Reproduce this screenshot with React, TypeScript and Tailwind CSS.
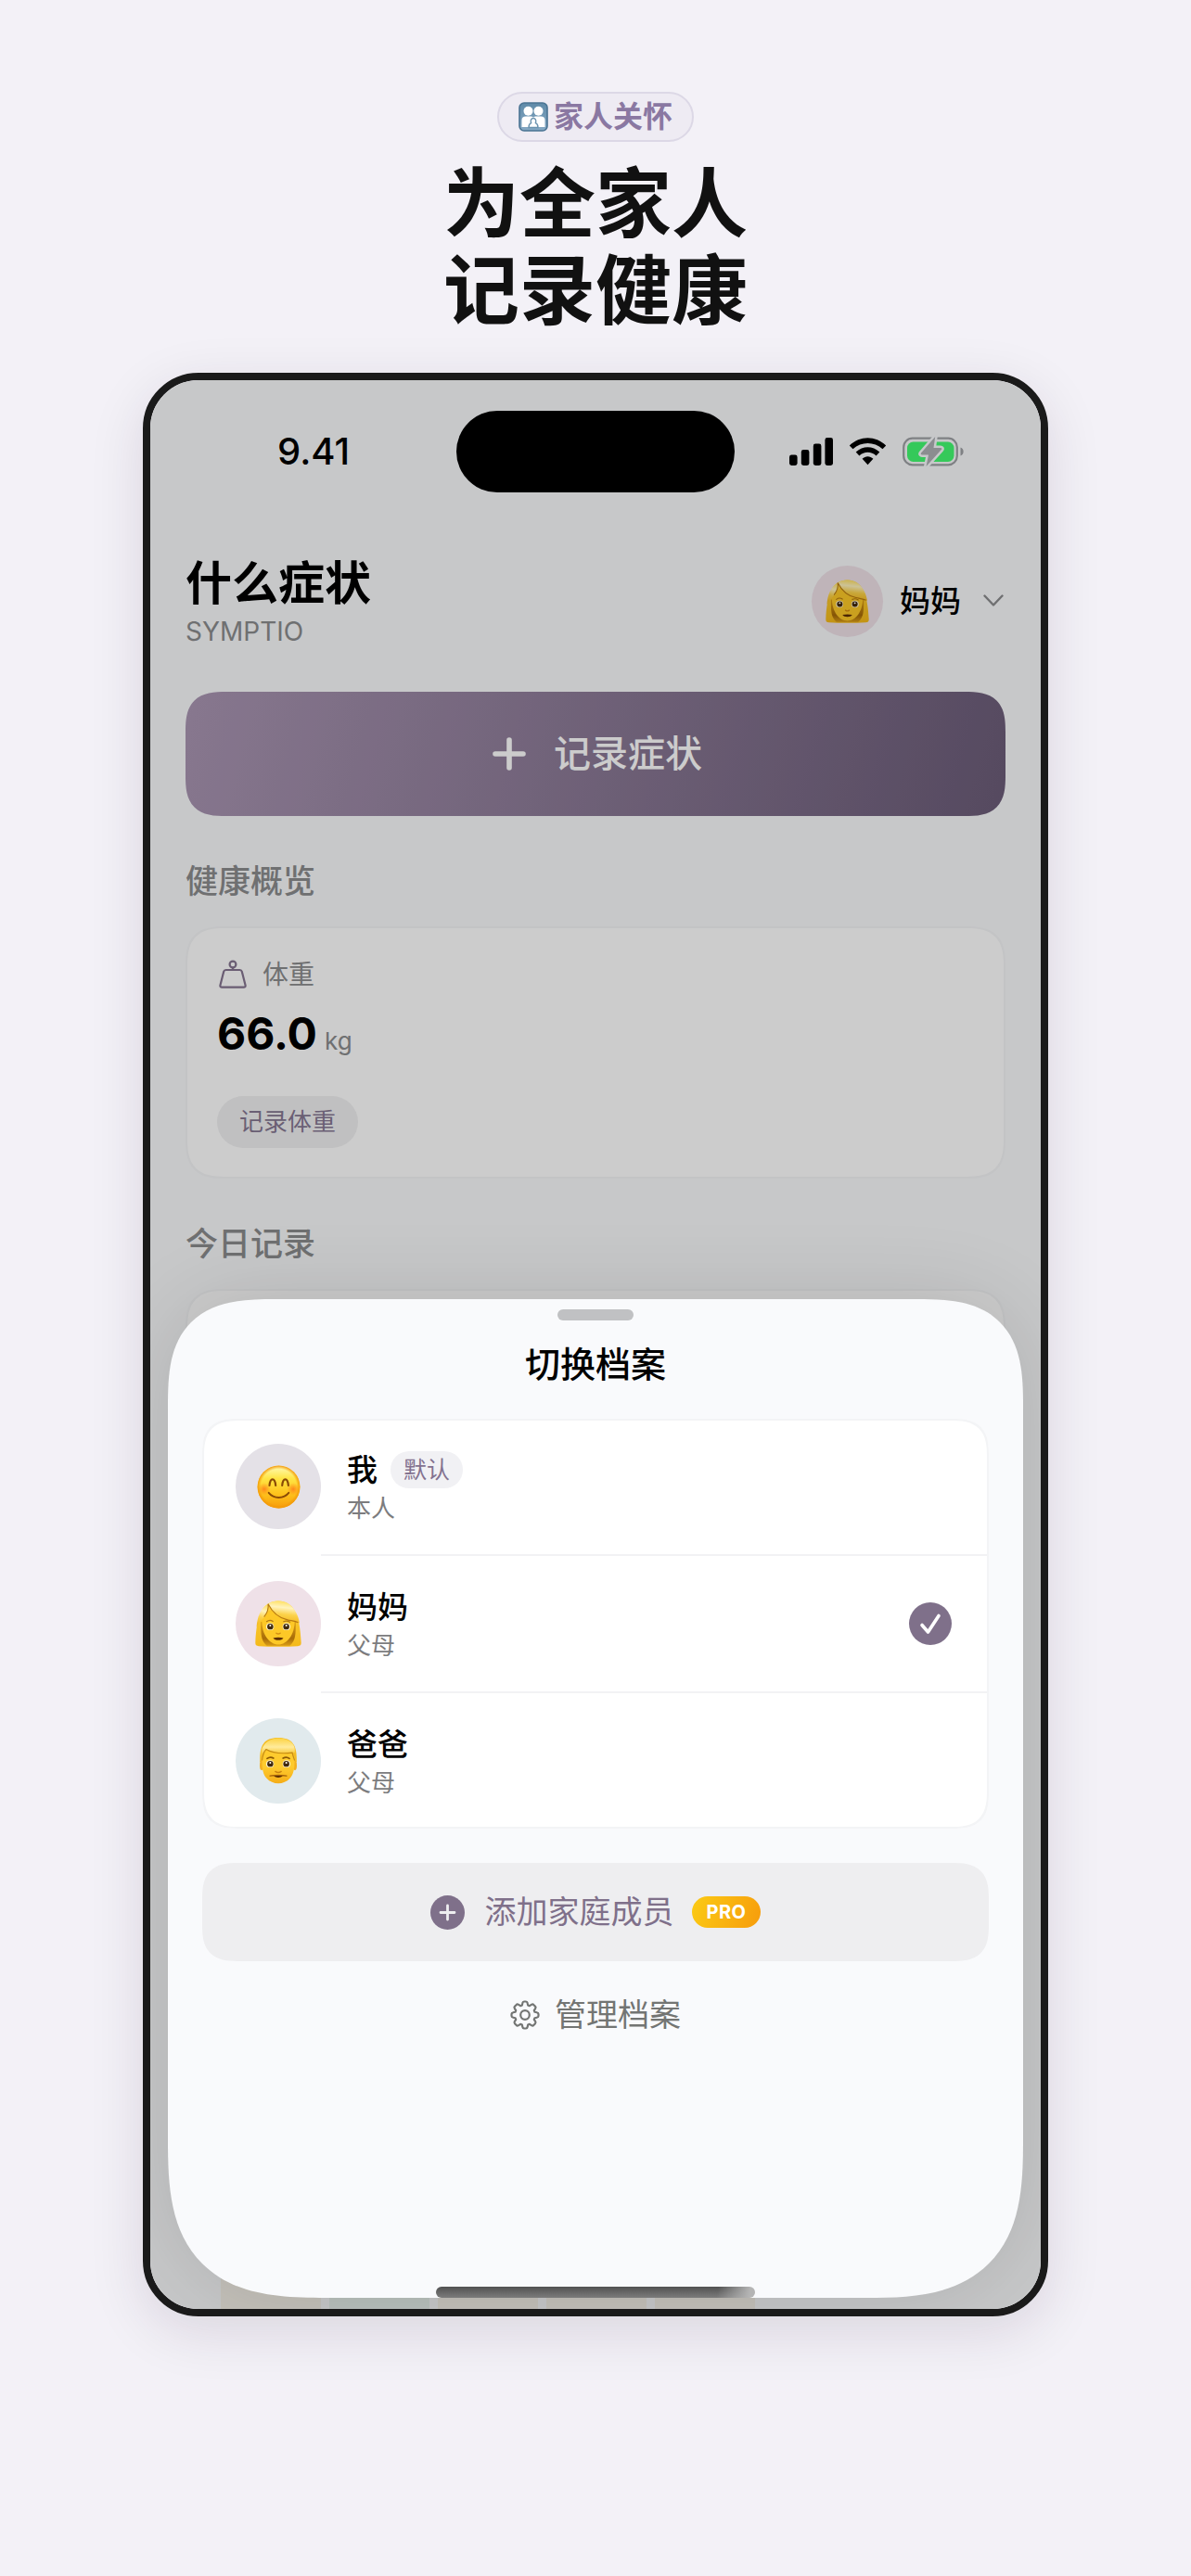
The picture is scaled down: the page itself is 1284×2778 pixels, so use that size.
import React from 'react';
import clsx from 'clsx';

type AvatarKind = 'smile' | 'woman' | 'man';

interface Profile {
  name: string;
  relation: string;
  avatar: AvatarKind;
  isDefault?: boolean;
  selected?: boolean;
}

const profiles: Profile[] = [
  { name: '我', relation: '本人', avatar: 'smile', isDefault: true },
  { name: '妈妈', relation: '父母', avatar: 'woman', selected: true },
  { name: '爸爸', relation: '父母', avatar: 'man' },
];

const avatarBackground: Record<AvatarKind, string> = {
  smile: 'bg-[#e4e1e7]',
  woman: 'bg-[#efe1e8]',
  man: 'bg-[#e1eaed]',
};

const FamilyIcon = () => (
  <svg className="size-8" viewBox="0 0 32 32" aria-hidden="true">
    <defs>
      <linearGradient id="family-bg" x1="0" y1="0" x2="0" y2="1">
        <stop offset="0" stopColor="#5f8aa8" />
        <stop offset="1" stopColor="#86a9c4" />
      </linearGradient>
    </defs>
    <rect x="1" y="1" width="30" height="30" rx="5" fill="url(#family-bg)" stroke="#4a7493" strokeWidth="1.600" />
    <g fill="#fff">
      <circle cx="10.500" cy="9.800" r="5" />
      <circle cx="21.500" cy="9.800" r="5" />
      <path d="M3.500 27V19.500c0-2.600 1.600-4.100 4.500-4.100h5c1.600 0 2.400.600 3 1.400.600-.800 1.400-1.400 3-1.400h5c2.900 0 4.500 1.500 4.500 4.100v7.500z" />
    </g>
    <path d="M11 27.500c0-3 .9-4.200 2.600-4.900-1.100-3.200.4-5.100 2.400-5.100s3.500 1.900 2.400 5.100c1.700.7 2.600 1.900 2.600 4.900z" fill="#fff" stroke="#6b93af" strokeWidth="1.400" />
  </svg>
);

const SmileFace = () => (
  <svg className="size-full" viewBox="0 0 48 48" aria-hidden="true">
    <defs>
      <linearGradient id="smile-skin" x1="0" y1="0" x2="0" y2="1">
        <stop offset="0" stopColor="#fffbb8" />
        <stop offset="0.3" stopColor="#ffe545" />
        <stop offset="0.65" stopColor="#fec41d" />
        <stop offset="1" stopColor="#f79b0b" />
      </linearGradient>
      <radialGradient id="smile-rim">
        <stop offset="0.84" stopColor="#f39a0a" stopOpacity="0" />
        <stop offset="1" stopColor="#f39a0a" />
      </radialGradient>
      <radialGradient id="smile-cheek">
        <stop offset="0" stopColor="#ff7a1a" stopOpacity="0.85" />
        <stop offset="1" stopColor="#ff8a1a" stopOpacity="0" />
      </radialGradient>
    </defs>
    <circle cx="24" cy="24" r="23.400" fill="url(#smile-skin)" />
    <circle cx="24" cy="24" r="23.400" fill="url(#smile-rim)" />
    <circle cx="8" cy="26.500" r="7" fill="url(#smile-cheek)" />
    <circle cx="40" cy="26.500" r="7" fill="url(#smile-cheek)" />
    <g fill="none" stroke="#8a4b06" strokeLinecap="round">
      <path d="M13.800 22.500c.4-4.600 1.600-6.800 3.400-6.800s3 2.200 3.400 6.800" strokeWidth="2.200" />
      <path d="M27.800 22.500c.4-4.600 1.600-6.800 3.400-6.800s3 2.200 3.400 6.800" strokeWidth="2.200" />
      <path d="M13 30.500c3 3.800 6.600 5.200 11 5.200s8-1.400 11-5.200" strokeWidth="2" />
    </g>
  </svg>
);

const Eyes = () => (
  <>
    <ellipse cx="15.500" cy="27" rx="4" ry="3.800" fill="#fff6d8" />
    <ellipse cx="32.500" cy="27" rx="4" ry="3.800" fill="#fff6d8" />
    <circle cx="15.700" cy="27" r="3.100" fill="#41290b" />
    <circle cx="32.300" cy="27" r="3.100" fill="#41290b" />
    <circle cx="15.700" cy="25.900" r="1" fill="#fff" />
    <circle cx="32.300" cy="25.900" r="1" fill="#fff" />
  </>
);

const WomanFace = () => (
  <svg className="size-full" viewBox="0 0 48 48" aria-hidden="true">
    <defs>
      <linearGradient id="woman-hair" x1="0" y1="0" x2="0" y2="1">
        <stop offset="0" stopColor="#ffd84a" />
        <stop offset="0.5" stopColor="#f8c428" />
        <stop offset="1" stopColor="#f4b91a" />
      </linearGradient>
      <linearGradient id="woman-shade" x1="0" y1="0" x2="0" y2="1">
        <stop offset="0" stopColor="#d99c16" />
        <stop offset="0.7" stopColor="#a86c08" />
        <stop offset="1" stopColor="#d99c16" />
      </linearGradient>
      <linearGradient id="woman-fringe" x1="0.600" y1="0" x2="0.450" y2="1">
        <stop offset="0" stopColor="#ffdf5c" />
        <stop offset="0.3" stopColor="#fff3bd" />
        <stop offset="0.6" stopColor="#fcd24a" />
        <stop offset="1" stopColor="#f3b71c" />
      </linearGradient>
    </defs>
    <path d="M24 .5C8.500.500 1.500 14 .3 44c0 2.400 1 3.100 3.400 3.200 13 .8 27.600.800 40.600 0 2.400-.1 3.400-.8 3.400-3.200C46.500 14 39.500.500 24 .500z" fill="url(#woman-hair)" />
    <path d="M6 22C6 36 6 41 12 46.800h24C42 41 42 36 42 22z" fill="url(#woman-shade)" />
    <path d="M7 21c0 14 7.800 24.500 17 24.500S41 35 41 21c0-8-7-12-17-12S7 13 7 21z" fill="#fdc827" />
    <path d="M13.500 3.500C5.500 8 2.300 17 1.500 27.500c2-5 5.500-7 8.800-11.500 2.700-4 3.700-8 3.200-12.500z" fill="url(#woman-fringe)" />
    <path d="M13.500 3.500c6-4.300 17-4 23.500 2 4.500 4 8 10.500 9 18-3.500-2.300-7.500-2.300-12.500-3.500C25 18 18 12.500 13.500 3.500z" fill="url(#woman-fringe)" />
    <path d="M13.500 3.500c.7 5-1 9.500-4.200 13.500M13.500 3.500C18 12.500 25 18 33.500 20c4 1 8 1.200 11 2.800" fill="none" stroke="#b87a10" strokeWidth="1.100" />
    <path d="M12 21.800c2-1.600 4.600-1.600 6.500-.3M29.500 21.800c2-.9 4.600-.6 6.500.6" fill="none" stroke="#b37a12" strokeWidth="1.200" strokeLinecap="round" />
    <Eyes />
    <path d="M22 33.800c1.300 1 2.700 1 4 0" fill="none" stroke="#d28d12" strokeWidth="1.400" strokeLinecap="round" />
    <path d="M18.700 38.800c3.500-.8 7.100-.8 10.600 0-1.500 3-9 3-10.600 0z" fill="#5d2f05" />
  </svg>
);

const ManFace = () => (
  <svg className="size-full" viewBox="0 0 48 48" aria-hidden="true">
    <defs>
      <linearGradient id="man-hair" x1="0" y1="0" x2="0" y2="1">
        <stop offset="0" stopColor="#fcd345" />
        <stop offset="0.4" stopColor="#ffeb9c" />
        <stop offset="0.7" stopColor="#f9c832" />
        <stop offset="1" stopColor="#eeb01a" />
      </linearGradient>
      <linearGradient id="man-skin" x1="0" y1="0" x2="0" y2="1">
        <stop offset="0.5" stopColor="#fecb2e" />
        <stop offset="1" stopColor="#f5ad18" />
      </linearGradient>
    </defs>
    <path d="M24 0C9 0 4.500 8 5 25h38C43.500 8 39 0 24 0z" fill="#f3bb22" />
    <ellipse cx="6.800" cy="28.500" rx="2" ry="5" fill="#f2b021" />
    <ellipse cx="41.200" cy="28.500" rx="2" ry="5" fill="#f2b021" />
    <path d="M7.200 20c-.3 12 .8 17.500 4.800 22 6 7 18 7 24 0 4-4.500 5.100-10 4.800-22l-2.800-7H10z" fill="url(#man-skin)" />
    <path d="M10.500 6C17-1.500 34-1.500 39.500 7c1.700 3 1.800 5.500 1.500 8.500C31 16.500 18 16 11.500 12c-2.300 2-3.500 5.500-4.300 11.500C5 17 6.500 10 10.500 6z" fill="url(#man-hair)" />
    <path d="M11.500 12C18 16 30 16.500 38.500 15.500c.5 3 1.500 5 2.400 8M11.500 12c-2.300 2-3.500 5.500-4.300 11.500" fill="none" stroke="#c58b14" strokeWidth="1.100" />
    <path d="M12.500 21.500c2-1.500 4.600-1.500 6.500-.4M29 21.100c2-1.100 4.600-1.100 6.500.4" fill="none" stroke="#8a5806" strokeWidth="1.700" strokeLinecap="round" />
    <Eyes />
    <path d="M21 35c2 1.400 4 1.400 6 0" fill="none" stroke="#c98410" strokeWidth="1.500" strokeLinecap="round" />
    <path d="M15.500 39.500c3-.7 14-.7 17 0" fill="none" stroke="#a9660a" strokeWidth="1.400" strokeLinecap="round" />
    <path d="M19.500 39.700c3-.6 6-.6 9 0-2 2-7 2-9 0z" fill="#5d2f05" />
  </svg>
);

const faces: Record<AvatarKind, React.FC> = {
  smile: SmileFace,
  woman: WomanFace,
  man: ManFace,
};

const Avatar: React.FC<{ kind: AvatarKind; small?: boolean }> = ({ kind, small }) => {
  const Face = faces[kind];
  return (
    <span
      className={clsx(
        'flex shrink-0 items-center justify-center rounded-full',
        small ? 'size-[77px]' : 'size-[92px]',
        avatarBackground[kind]
      )}
    >
      <span className={small || kind === 'smile' ? 'size-[47px]' : 'size-[50px]'}>
        <Face />
      </span>
    </span>
  );
};

const StatusBar = () => (
  <div className="z-10 mt-[33px] grid h-[88px] grid-cols-[1fr_300px_1fr] items-center self-start [grid-area:1/1]">
    <span className="pl-[137px] text-[40px] leading-[48px] font-medium">9.41</span>
    <div className="h-full rounded-full bg-black" />
    <div className="flex items-center justify-end pr-[82px]">
      <svg className="h-[30px] w-[47px]" viewBox="0 0 47 30" role="img" aria-label="信号">
        <rect x="0" y="18.500" width="8.600" height="11.500" rx="2.400" />
        <rect x="12.800" y="13" width="8.600" height="17" rx="2.400" />
        <rect x="25.800" y="6.500" width="8.600" height="23.500" rx="2.400" />
        <rect x="38.400" y="0" width="8.600" height="30" rx="2.400" />
      </svg>
      <svg className="ml-[17px] h-[30px] w-[42px]" viewBox="0 0 42 30" role="img" aria-label="无线网络">
        <path d="M.8 8.400C12-2.600 29-2.600 40.200 8.400l-3.700 3.900C27.500 3.800 13.500 3.800 4.500 12.300z" />
        <path d="M7.700 15.600c7.600-7.200 18-7.200 25.600 0l-3.700 3.900c-5.200-5-13-5-18.200 0z" />
        <path d="M14.600 22.800c3.500-3.500 8.300-3.500 11.800 0L20.500 29.300z" />
      </svg>
      <svg className="ml-4 h-8 w-[67px]" viewBox="0 0 67 32" role="img" aria-label="正在充电">
        <rect x="1.200" y="1.700" width="57.600" height="28.600" rx="9.500" fill="none" stroke="#7f8184" strokeWidth="2.200" />
        <path d="M62.500 11.500c4.200 1.400 4.200 7.600 0 9z" fill="#7f8184" />
        <rect x="5" y="5.500" width="50.500" height="21.500" rx="6.500" fill="#35c95a" />
        <path d="M35.200 0 20 17.600c-.8 1 0 1.900 1 1.900h7L25.500 32 42 13.800c.8-1 0-1.900-1-1.900h-7.500z" fill="#8b8d90" stroke="#c7c8ca" strokeWidth="5" strokeLinejoin="round" />
        <path d="M35.200 0 20 17.600c-.8 1 0 1.900 1 1.900h7L25.500 32 42 13.800c.8-1 0-1.900-1-1.900h-7.500z" fill="#8b8d90" />
      </svg>
    </div>
  </div>
);

const HomeScreen = () => (
  <div className="flex min-w-0 flex-col bg-[#f9fafc] px-[38px] pt-[189px] [grid-area:1/1]">
    <header className="flex items-center justify-between">
      <div>
        <h2 className="text-[50px] leading-[60px] font-bold">什么症状</h2>
        <p className="mt-[6px] text-[28px] leading-8 text-[#8b8c8e]">SYMPTIO</p>
      </div>
      <button className="flex items-center">
        <Avatar kind="woman" small />
        <span className="ml-[18px] text-[33px] leading-10 font-medium">妈妈</span>
        <svg className="mr-[2px] ml-6 h-[14px] w-[22px]" viewBox="0 0 22 14" aria-hidden="true">
          <path d="m1.500 1.500 9.500 10 9.500-10" fill="none" stroke="#8b8c8e" strokeWidth="2.400" strokeLinecap="round" strokeLinejoin="round" />
        </svg>
      </button>
    </header>

    <button className="mt-[49px] flex h-[134px] items-center justify-center rounded-[44px] bg-linear-[105deg,#aa96b3,#6b5c78] pl-1 text-white [corner-shape:superellipse(1.5)]">
      <svg className="size-9" viewBox="0 0 36 36" aria-hidden="true">
        <path d="M18 3v30M3 18h30" fill="none" stroke="currentColor" strokeWidth="5.600" strokeLinecap="round" />
      </svg>
      <span className="ml-[30px] text-[40px] leading-[48px] font-medium">记录症状</span>
    </button>

    <h3 className="mt-[46px] text-[35px] leading-[48px] font-medium text-[#8b8c8e]">健康概览</h3>
    <section className="mt-[25px] rounded-[44px] border-2 border-[#f4f5f7] bg-white px-8 pt-[34px] pb-[31px] [corner-shape:superellipse(1.5)]">
      <div className="flex items-center">
        <svg className="ml-[2px] h-8 w-[30px]" viewBox="0 0 30 32" fill="none" stroke="#857590" strokeWidth="2.200" aria-hidden="true">
          <circle cx="15" cy="5" r="3.400" />
          <path d="M15 8.400V11M7.500 11h15c1.300 0 2 .6 2.300 1.700l3.700 14.500c.4 1.600-.3 2.500-1.900 2.500H3.400c-1.600 0-2.300-.9-1.900-2.500l3.700-14.500C5.500 11.600 6.200 11 7.500 11z" />
        </svg>
        <span className="ml-[17px] text-[28px] leading-8 text-[#8b8c8e]">体重</span>
      </div>
      <p className="mt-[18px] flex items-baseline gap-2">
        <span className="text-[48px] leading-[60px] font-bold">66.0</span>
        <span className="text-[26px] leading-8 text-[#8b8c8e]">kg</span>
      </p>
      <button className="mt-[37px] flex h-14 items-center rounded-full bg-[#f1f1f2] px-6 text-[26px] leading-8 text-[#857792]">
        记录体重
      </button>
    </section>

    <h3 className="mt-[46px] text-[35px] leading-[48px] font-medium text-[#8b8c8e]">今日记录</h3>
    <section className="mt-[25px] h-[272px] rounded-[44px] border-2 border-[#f4f5f7] bg-white [corner-shape:superellipse(1.5)]" />

    <div className="mt-auto flex h-12 gap-[9px] pl-[38px]">
      <span className="w-[108px] bg-[#f5f2e9]" />
      <span className="w-[108px] bg-[#e8f2ed]" />
      <span className="w-[108px] bg-[#f5f2e9]" />
      <span className="w-[108px] bg-[#f5f2e9]" />
      <span className="w-[108px] bg-[#f5f2e9]" />
    </div>
  </div>
);

const ProfileRow: React.FC<{ profile: Profile }> = ({ profile }) => (
  <button className="flex w-full items-center py-[27px] pr-10 pl-9 text-left">
    <Avatar kind={profile.avatar} />
    <span className="ml-7 flex flex-col gap-1 pt-1">
      <span className="flex items-center text-[33px] leading-10 font-medium">
        {profile.name}
        {profile.isDefault && (
          <span className="ml-[14px] rounded-full bg-[#f1f1f4] px-[14px] text-[25px] font-normal text-[#83728f]">
            默认
          </span>
        )}
      </span>
      <span className="text-[26px] leading-9 text-[#7c7c7e]">{profile.relation}</span>
    </span>
    {profile.selected && (
      <svg className="ml-auto size-[46px]" viewBox="0 0 46 46" role="img" aria-label="已选择">
        <circle cx="23" cy="23" r="23" fill="#7f708a" />
        <path d="m14 24.500 6.500 7.500L32 14.500" fill="none" stroke="#fff" strokeWidth="3.600" strokeLinecap="round" strokeLinejoin="round" />
      </svg>
    )}
  </button>
);

const ProfileSheet = () => (
  <div
    role="dialog"
    aria-labelledby="sheet-title"
    className="z-10 mx-[19px] mt-[991px] mb-3 flex min-w-0 flex-col rounded-t-[115px] rounded-b-[170px] bg-[#f9fafc] px-[37px] shadow-[0_0_90px_rgba(0,0,0,0.12)] [corner-shape:superellipse(1.5)] [grid-area:1/1]"
  >
    <div className="mt-[11px] h-3 w-[82px] self-center rounded-full bg-[#c0c1c3]" />
    <h2 id="sheet-title" className="mt-[23px] text-center text-[38px] leading-[48px] font-medium">
      切换档案
    </h2>

    <ul className="mt-[35px] rounded-[40px] bg-white inset-ring-2 inset-ring-[#f3f4f6] [corner-shape:superellipse(1.5)]">
      {profiles.map((profile, i) => (
        <li key={profile.name}>
          {i > 0 && <div className="mr-[2px] ml-32 h-[2px] bg-[#f2f2f4]" />}
          <ProfileRow profile={profile} />
        </li>
      ))}
    </ul>

    <button className="mt-[37px] flex h-[106px] items-center justify-center rounded-[40px] bg-[#eeeef0] text-[#7f708a] [corner-shape:superellipse(1.5)]">
      <svg className="size-[37px]" viewBox="0 0 37 37" aria-hidden="true">
        <circle cx="18.500" cy="18.500" r="18.500" fill="currentColor" />
        <path d="M18.500 11v15M11 18.500h15" stroke="#eeeef0" strokeWidth="2.800" strokeLinecap="round" />
      </svg>
      <span className="ml-[21px] text-[34px] leading-10">添加家庭成员</span>
      <span className="ml-5 flex h-[34px] items-center rounded-full bg-linear-[110deg,#fbcb14,#f79c0c] px-[15px] text-[20px] leading-6 font-bold tracking-wide text-white">
        PRO
      </span>
    </button>

    <button className="mt-[34px] flex items-center self-center text-[34px] leading-[48px] text-[#737573]">
      <svg className="mr-4 size-8" viewBox="0 0 32 32" fill="none" stroke="currentColor" strokeWidth="2.200" strokeLinejoin="round" aria-hidden="true">
        <path d="M13.300 3.200c.2-1.100.8-1.700 1.700-1.700h2c.9 0 1.500.6 1.700 1.700l.5 2.300 1.700.7 2-1.300c.9-.6 1.800-.6 2.400.1l1.700 1.700c.7.600.7 1.500.1 2.400l-1.300 2 .7 1.700 2.300.5c1.100.2 1.700.8 1.700 1.700v2c0 .9-.6 1.500-1.700 1.700l-2.300.5-.7 1.700 1.300 2c.6.9.6 1.800-.1 2.400l-1.700 1.700c-.6.7-1.500.7-2.400.1l-2-1.300-1.700.7-.5 2.300c-.2 1.100-.8 1.700-1.700 1.700h-2c-.9 0-1.500-.6-1.700-1.700l-.5-2.300-1.700-.7-2 1.300c-.9.600-1.800.6-2.400-.1L5 25.300c-.7-.6-.7-1.500-.1-2.400l1.300-2-.7-1.700-2.300-.5c-1.100-.2-1.700-.8-1.700-1.700v-2c0-.9.600-1.500 1.700-1.700l2.300-.5.7-1.700-1.300-2C4.300 8.200 4.300 7.300 5 6.700L6.700 5c.6-.7 1.500-.7 2.400-.1l2 1.300 1.700-.7z" />
        <circle cx="16" cy="16" r="4.800" />
      </svg>
      管理档案
    </button>

    <div className="mt-[269px] h-3 w-[344px] self-center rounded-full bg-[linear-gradient(100deg,transparent_88%,#b4b4b4_98%),linear-gradient(#515151,#7c7c7c)]" />
  </div>
);

export default function App() {
  return (
    <main className="flex min-h-screen flex-col items-center bg-[#f3f1f7] pt-[99px] pb-20 font-['Inter','Noto_Sans_CJK_SC',sans-serif] text-black">
      <p className="flex h-[54px] items-center gap-[6px] rounded-full border-2 border-[#dcd8e6] bg-[#eeebf3] px-[21px] text-[32px] leading-10 font-bold text-[#8a78a2]">
        <FamilyIcon />
        家人关怀
      </p>
      <h1 className="mt-5 text-center text-[82px] leading-[94px] font-bold text-[#111]">
        为全家人
        <br />
        记录健康
      </h1>

      <div className="mt-[41px] grid w-[76%] grid-cols-1 overflow-hidden rounded-[60px] border-8 border-[#1a1a1a] shadow-[0_16px_60px_rgba(40,20,50,0.12)]">
        <HomeScreen />
        <div className="bg-black/20 [grid-area:1/1]" />
        <StatusBar />
        <ProfileSheet />
      </div>
    </main>
  );
}
